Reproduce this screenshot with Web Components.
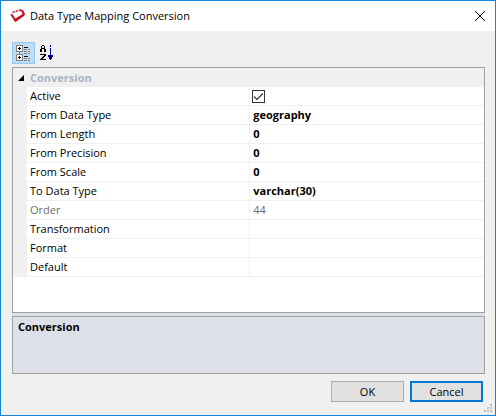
<!DOCTYPE html>
<html lang="en">
<head>
<meta charset="utf-8">
<title>Data Type Mapping Conversion</title>
<style>
  html, body { margin: 0; }
  body { font: 11px/18px "Open Sans", "Noto Sans", sans-serif; color: #000; }
</style>
</head>
<body>
<app-dialog>
  <title-bar slot="title">Data Type Mapping Conversion</title-bar>
  <grid-toolbar></grid-toolbar>
  <property-grid category="Conversion">
    <property-item name="Active" type="boolean" value="true"></property-item>
    <property-item name="From Data Type" value="geography"></property-item>
    <property-item name="From Length" value="0"></property-item>
    <property-item name="From Precision" value="0"></property-item>
    <property-item name="From Scale" value="0"></property-item>
    <property-item name="To Data Type" value="varchar(30)"></property-item>
    <property-item name="Order" value="44" readonly></property-item>
    <property-item name="Transformation"></property-item>
    <property-item name="Format"></property-item>
    <property-item name="Default"></property-item>
  </property-grid>
  <help-pane>Conversion</help-pane>
  <dialog-button slot="actions">OK</dialog-button>
  <dialog-button slot="actions" default>Cancel</dialog-button>
</app-dialog>

<script>
function define(name, html, setup) {
  const template = document.createElement('template');
  template.innerHTML = html;
  customElements.define(name, class extends HTMLElement {
    constructor() {
      super();
      this.attachShadow({ mode: 'open' }).append(template.content.cloneNode(true));
    }
    connectedCallback() { if (setup) setup(this, this.shadowRoot); }
  });
}

define('app-dialog', `
  <style>
    :host { display: flex; flex-direction: column; box-sizing: border-box; min-height: 100vh;
      position: relative; background: #f0f0f0; border: 1px solid #1883d7; }
    main { flex: 1; display: flex; flex-direction: column; padding: 11px 10px 0 11px; }
    footer { display: flex; justify-content: flex-end; gap: 6px; padding: 7px 12px 13px; }
    .grip { position: absolute; right: 3px; bottom: 3px; }
  </style>
  <slot name="title"></slot>
  <main><slot></slot></main>
  <footer><slot name="actions"></slot></footer>
  <svg class="grip" width="8" height="8" fill="#bfbfbf" shape-rendering="crispEdges" aria-hidden="true">
    <path d="M6 0h2v2h-2zM3 3h2v2h-2zM6 3h2v2h-2zM0 6h2v2h-2zM3 6h2v2h-2zM6 6h2v2h-2z"/>
  </svg>`);

define('title-bar', `
  <style>
    :host { display: flex; align-items: center; height: 30px; background: #fff; padding-left: 8px; }
    h1 { flex: 1; margin: 0 0 0 5px; font: inherit; }
    button { width: 32px; height: 30px; border: 0; padding: 0; background: none; display: grid; place-items: center; }
    .close { margin-right: -1px; }
  </style>
  <svg width="16" height="16" viewBox="0 0 16 16" fill="none" aria-hidden="true">
    <path d="M0.500 6.500L3 5L6 10L5.500 13z" fill="#d9bcc0"/>
    <path d="M2.500 6.500L6 12" stroke="#b01c2a" stroke-width="1.800"/>
    <path d="M3.500 4.500L11 2" stroke="#d8434f" stroke-width="1.800" stroke-dasharray="2.500 0.800"/>
    <path d="M11 1L14.500 2.500L16 6.500L13.500 6.500L12.800 3.800L10.500 3z" fill="#d71725"/>
    <path d="M5.500 11L15.500 5V7.500L6.500 14L4.800 12.500z" fill="#c60d1c"/>
  </svg>
  <h1><slot></slot></h1>
  <button class="close" type="button" aria-label="Close">
    <svg width="10" height="10" stroke="#000" aria-hidden="true"><path d="M0 0L10 10M10 0L0 10"/></svg>
  </button>`);

define('grid-toolbar', `
  <style>
    :host { display: flex; height: 22px; padding-bottom: 3px; }
    button { box-sizing: border-box; width: 23px; height: 22px; padding: 0; border: 1px solid transparent;
      background: none; display: grid; place-items: center; }
    button[aria-pressed=true] { background: #c0dcf3; border-color: #90c8f6; }
    svg { display: block; }
  </style>
  <button type="button" aria-label="Categorized" aria-pressed="true">
    <svg width="15" height="16" shape-rendering="crispEdges" aria-hidden="true">
      <path d="M0 0h7v7h-7zM0 9h7v7h-7z" fill="#808080"/>
      <path d="M1 1h5v5h-5zM1 10h5v5h-5z" fill="#fff"/>
      <path d="M3 7h1v2h-1z" fill="#808080"/>
      <path d="M2 3h3v1h-3zM3 2h1v3h-1zM2 12h3v1h-3zM3 11h1v3h-1zM8 2h4v1h-4zM8 11h4v1h-4z" fill="#000"/>
      <path d="M8 4h3v1h-3zM12 4h2v1h-2zM8 6h3v1h-3zM12 6h2v1h-2zM8 8h3v1h-3zM12 8h2v1h-2zM8 13h3v1h-3zM12 13h2v1h-2zM8 15h3v1h-3zM12 15h2v1h-2z" fill="#808080"/>
    </svg>
  </button>
  <button type="button" aria-label="Alphabetical" aria-pressed="false">
    <svg width="13" height="16" shape-rendering="crispEdges" aria-hidden="true">
      <path d="M2 0h2v1h-2zM1 1h1v2h-1zM4 1h1v2h-1zM1 3h4v1h-4zM0 4h2v3h-2zM4 4h2v3h-2zM0 9h6v1h-6zM4 10h2v1h-2zM3 11h2v1h-2zM2 12h2v1h-2zM1 13h2v1h-2zM0 14h6v1h-6z" fill="#000"/>
      <path d="M10 0h1v2h-1zM10 3h1v9h-1zM8 10h5v1h-5zM8 11h5v1h-5zM9 12h3v2h-3zM10 14h1v1h-1z" fill="#00008b"/>
    </svg>
  </button>`);

customElements.define('property-item', class extends HTMLElement {
  constructor() {
    super();
    this.attachShadow({ mode: 'open' }).innerHTML = '<style>:host { display: none; }</style>';
  }
});

define('property-grid', `
  <style>
    :host { display: block; flex: 1; background: #fff; border: 1px solid #a0a0a0; }
    table { width: 100%; table-layout: fixed; border-collapse: separate; border-spacing: 0; }
    .gutter { width: 14px; }
    .names { width: 47.4%; }
    th, td { box-sizing: border-box; height: 19px; padding: 0 3px; line-height: 18px; text-align: left;
      font-weight: 400; white-space: nowrap; overflow: hidden; }
    .strip { background: #f0f0f0; padding: 0; }
    tbody th, tbody td:not(.strip) { border-bottom: 1px solid #f0f0f0; }
    tbody th { border-right: 1px solid #f0f0f0; }
    thead th { background: #f0f0f0; color: #a9b4c4; font-weight: 700; }
    td { font-weight: 700; }
    .readonly th, .readonly td { color: #6d6d6d; font-weight: 400; }
    .toggle { display: block; width: 14px; height: 18px; border: 0; padding: 0 0 0 5px; background: none; }
    .toggle svg { display: block; }
    input { appearance: none; display: block; box-sizing: border-box; width: 13px; height: 13px; margin: 0 0 0 -1px;
      border: 1px solid #333; background: #fff; }
    input:checked { background: #fff url("data:image/svg+xml,%3Csvg xmlns='http://www.w3.org/2000/svg' width='11' height='11'%3E%3Cpath d='M1 5.5L4 8.5L10 2.5' fill='none' stroke='%23333' stroke-width='1.2'/%3E%3C/svg%3E"); }
  </style>
  <table>
    <colgroup><col class="gutter"><col class="names"><col></colgroup>
    <thead><tr>
      <th class="strip"><button class="toggle" type="button" aria-label="Collapse category" aria-expanded="true">
        <svg width="6" height="6" aria-hidden="true"><path d="M6 0V6H0z"/></svg></button></th>
      <th class="category" colspan="2" scope="colgroup"></th>
    </tr></thead>
    <tbody></tbody>
  </table>`, (host, root) => {
  root.querySelector('.category').textContent = host.getAttribute('category');
  const body = root.querySelector('tbody');
  body.replaceChildren();
  host.querySelectorAll('property-item').forEach((item, i) => {
    const row = body.insertRow();
    row.classList.toggle('readonly', item.hasAttribute('readonly'));
    row.insertCell().className = 'strip';
    const head = document.createElement('th');
    head.scope = 'row';
    row.append(head);
    const cell = row.insertCell();
    const value = item.getAttribute('value') || '';
    if (item.getAttribute('type') === 'boolean') {
      const label = document.createElement('label');
      label.htmlFor = 'value-' + i;
      label.textContent = item.getAttribute('name');
      head.append(label);
      const box = document.createElement('input');
      box.type = 'checkbox';
      box.id = label.htmlFor;
      box.checked = value === 'true';
      cell.append(box);
    } else {
      head.textContent = item.getAttribute('name');
      cell.textContent = value;
    }
  });
});

define('help-pane', `
  <style>
    :host { display: block; background: #dde0e9; padding-top: 3px; }
    section { box-sizing: border-box; min-height: 58px; border: 1px solid #a0a0a0; padding: 1px 5px; font-weight: 700; }
  </style>
  <section aria-live="polite"><slot></slot></section>`);

define('dialog-button', `
  <style>
    :host { display: block; }
    button { box-sizing: border-box; min-width: 73px; height: 21px; padding: 0 8px; font: inherit; line-height: 17px;
      color: #000; background: #e1e1e1; border: 1px solid #adadad; display: block; }
    :host([default]) button { border: 2px solid #0078d7; }
  </style>
  <button type="button"><slot></slot></button>`);
</script>
</body>
</html>
